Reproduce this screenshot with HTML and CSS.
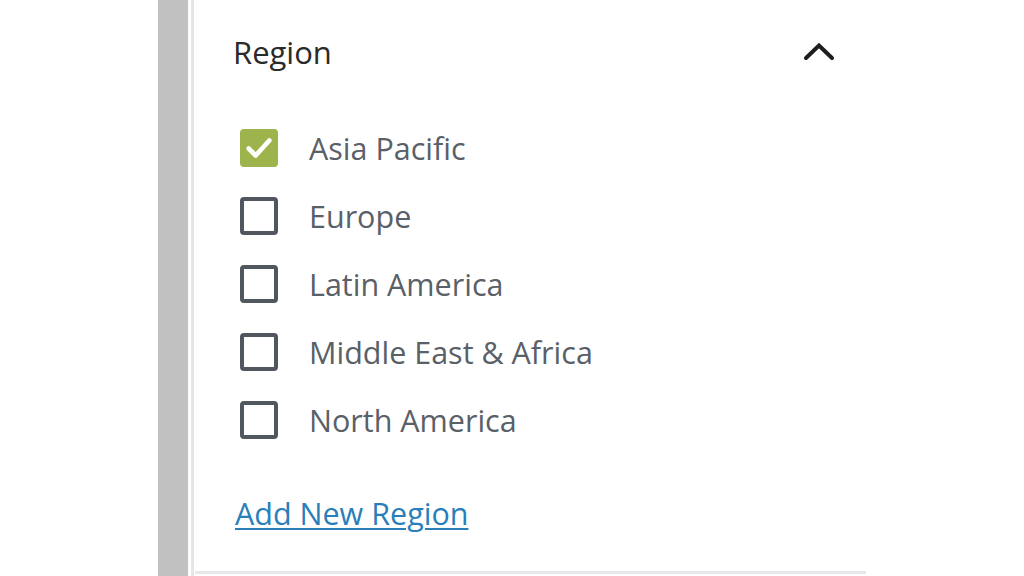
FILE: index.html
```html
<!DOCTYPE html>
<html lang="en">
<head>
<meta charset="utf-8">
<title>Region</title>
<link rel="stylesheet" href="styles.css">
</head>
<body>
<div class="layout">
  <div class="rail"></div>
  <div class="divider"></div>
  <section class="panel">
    <header class="panel-header">
      <h2 class="panel-title">Region</h2>
      <svg class="chevron" width="32" height="22" viewBox="0 0 32 22" aria-hidden="true">
        <polyline points="3,17 16,4.5 29,17" fill="none" stroke="#1e1e1e" stroke-width="4" stroke-linecap="round" stroke-linejoin="miter"/>
      </svg>
    </header>
    <ul class="options">
      <li class="option">
        <span class="box checked">
          <svg width="32" height="32" viewBox="0 0 32 32" aria-hidden="true"><polyline points="5,16.5 12.5,24 27,8" fill="none" stroke="#fff" stroke-width="5" stroke-linecap="round" stroke-linejoin="round"/></svg>
        </span>
        <span class="label">Asia Pacific</span>
      </li>
      <li class="option"><span class="box"></span><span class="label">Europe</span></li>
      <li class="option"><span class="box"></span><span class="label">Latin America</span></li>
      <li class="option"><span class="box"></span><span class="label">Middle East &amp; Africa</span></li>
      <li class="option"><span class="box"></span><span class="label">North America</span></li>
    </ul>
    <a class="add-link" href="#">Add New Region</a>
  </section>
</div>
</body>
</html>
```

FILE: styles.css
```css
* { box-sizing: border-box; }
html, body {
  margin: 0;
  padding: 0;
  background: #ffffff;
  height: 576px;
  overflow: hidden;
}
body {
  font-family: "Open Sans", "Noto Sans", sans-serif;
}
.layout {
  display: flex;
  height: 576px;
  padding-left: 158px;
}
.rail {
  width: 30px;
  background: #c1c1c1;
}
.divider {
  width: 3px;
  margin-left: 3px;
  background: #e6e6e6;
}
.panel {
  width: 671px;
  height: 574px;
  margin-left: 1px;
  padding-left: 38px;
  padding-right: 32px;
  border-bottom: 3px solid #e7e7ec;
  display: flex;
  flex-direction: column;
}
.panel-header {
  display: flex;
  align-items: center;
  justify-content: space-between;
  margin-top: 32px;
  height: 40px;
}
.panel-title {
  margin: 0;
  font-size: 31px;
  line-height: 40px;
  font-weight: 500;
  color: #2a2a2a;
}
.chevron {
  display: block;
  margin-right: -1px;
}
.options {
  list-style: none;
  margin: 42px 0 0 0;
  padding: 0;
}
.option {
  display: flex;
  align-items: center;
  height: 68px;
}
.box {
  width: 38px;
  height: 38px;
  margin-left: 7px;
  border: 4px solid #50575e;
  border-radius: 4px;
  display: flex;
  align-items: center;
  justify-content: center;
  flex-shrink: 0;
}
.box.checked {
  background: #9db34b;
  border-color: #9db34b;
}
.label {
  margin-left: 31px;
  font-size: 30.5px;
  line-height: 40px;
  color: #5a6067;
}
.add-link {
  margin-top: 39px;
  margin-left: 2px;
  align-self: flex-start;
  font-size: 30.5px;
  line-height: 40px;
  color: #2a7fba;
  text-decoration: underline;
  text-decoration-thickness: 2px;
  text-underline-offset: 3px;
}
```
